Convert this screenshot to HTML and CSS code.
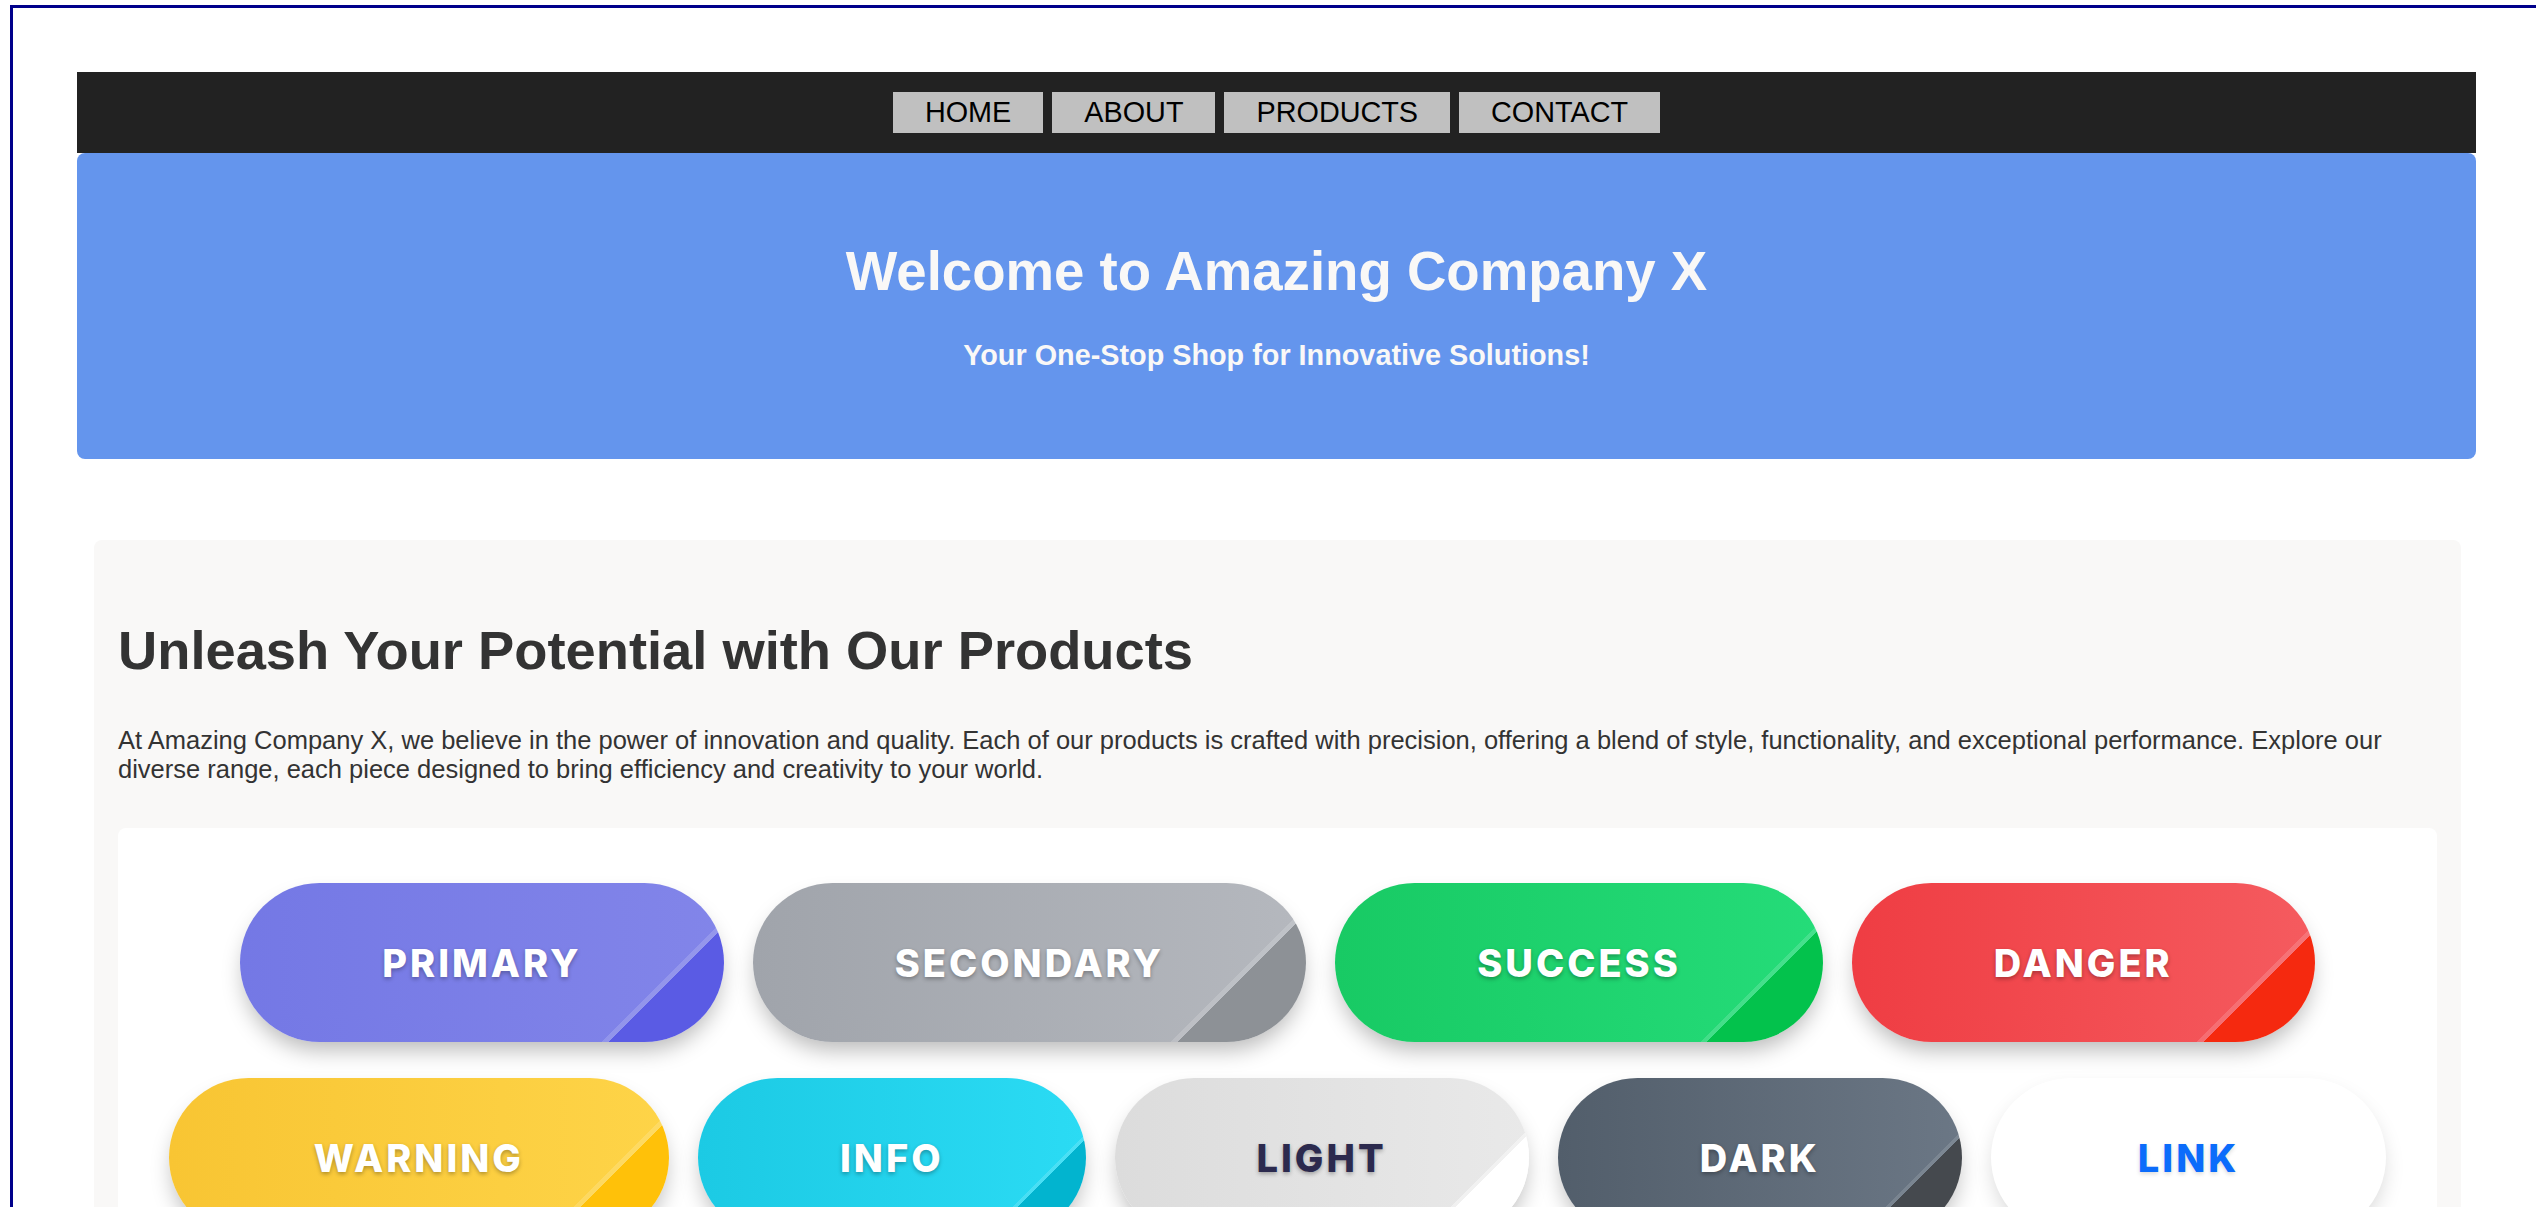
FILE: index.html
```html
<!DOCTYPE html>
<html lang="en">
<head>
<meta charset="utf-8">
<title>Amazing Company X</title>
<link rel="stylesheet" href="styles.css">
</head>
<body>
  <nav class="topnav">
    <a class="nav-link" href="#">HOME</a>
    <a class="nav-link" href="#">ABOUT</a>
    <a class="nav-link" href="#">PRODUCTS</a>
    <a class="nav-link" href="#">CONTACT</a>
  </nav>
  <header class="hero">
    <h1 class="hero-title">Welcome to Amazing Company X</h1>
    <p class="hero-sub">Your One-Stop Shop for Innovative Solutions!</p>
  </header>
  <section class="products">
    <h2 class="products-title">Unleash Your Potential with Our Products</h2>
    <p class="products-text">At Amazing Company X, we believe in the power of innovation and quality. Each of our products is crafted with precision, offering a blend of style, functionality, and exceptional performance. Explore our diverse range, each piece designed to bring efficiency and creativity to your world.</p>
    <div class="card">
      <div class="btns">
        <button class="btn btn-primary">PRIMARY</button>
        <button class="btn btn-secondary">SECONDARY</button>
        <button class="btn btn-success">SUCCESS</button>
        <button class="btn btn-danger">DANGER</button>
        <button class="btn btn-warning">WARNING</button>
        <button class="btn btn-info">INFO</button>
        <button class="btn btn-light">LIGHT</button>
        <button class="btn btn-dark">DARK</button>
        <button class="btn btn-link">LINK</button>
      </div>
    </div>
  </section>
</body>
</html>
```

FILE: styles.css
```css
html {
  overflow-x: hidden;
  background: #ffffff;
}

body {
  margin: 5px 10px 0 10px;
  border: 3px solid #00008b;
  padding: 64px;
  width: 2399px;
  background: #ffffff;
  font-family: "Liberation Sans", Arial, sans-serif;
}

.topnav {
  background: #222222;
  padding: 20px 0;
  display: flex;
  justify-content: center;
  gap: 9px;
}

.nav-link {
  display: block;
  background: #c0c0c0;
  color: #000000;
  text-decoration: none;
  font-size: 28.8px;
  line-height: 33px;
  padding: 4px 32px;
}

.hero {
  background: #6495ed;
  border-radius: 8px;
  padding: 87px 20px 87px;
  text-align: center;
  color: #f9f8f7;
}

.hero-title {
  margin: 0 0 36px;
  font-size: 54.6px;
  line-height: 63px;
  font-weight: 700;
}

.hero-sub {
  margin: 0;
  font-size: 28.8px;
  line-height: 33px;
  font-weight: 700;
}

.products {
  margin: 81px 15px 0 17px;
  background: #f9f8f7;
  border-radius: 8px;
  padding: 80px 24px 24px;
  color: #333333;
}

.products-title {
  margin: 0 0 44px;
  font-size: 54.3px;
  line-height: 62px;
  font-weight: 700;
}

.products-text {
  margin: 0 0 44px;
  font-size: 25.5px;
  line-height: 29px;
}

.card {
  background: #ffffff;
  border-radius: 8px;
  padding: 55px 30px 40px;
}

.btns {
  display: flex;
  flex-wrap: wrap;
  justify-content: center;
  column-gap: 29px;
  row-gap: 36px;
}

.btn {
  height: 159px;
  padding: 0 142px;
  border: none;
  border-radius: 80px;
  font-family: Inter, "Open Sans", sans-serif;
  font-weight: 800;
  font-size: 38px;
  letter-spacing: 3px;
  color: #ffffff;
  text-shadow: 0 2px 4px rgba(0, 0, 0, 0.3);
  box-shadow: 0 12px 22px -4px rgba(0, 0, 0, 0.28);
  cursor: pointer;
}

.btn-primary {
  background:
    linear-gradient(135deg, transparent 81%, rgba(255,255,255,0.15) 81%, rgba(255,255,255,0.15) 82%, #5a5be4 82%),
    linear-gradient(to right, #7478e5, #8285e9);
}

.btn-secondary {
  background:
    linear-gradient(135deg, transparent 81%, rgba(255,255,255,0.15) 81%, rgba(255,255,255,0.15) 82%, #8d9196 82%),
    linear-gradient(to right, #a0a4ab, #b5b8be);
}

.btn-success {
  background:
    linear-gradient(135deg, transparent 81%, rgba(255,255,255,0.15) 81%, rgba(255,255,255,0.15) 82%, #03c24c 82%),
    linear-gradient(to right, #18ca64, #25dc79);
}

.btn-danger {
  background:
    linear-gradient(135deg, transparent 81%, rgba(255,255,255,0.15) 81%, rgba(255,255,255,0.15) 82%, #f5290f 82%),
    linear-gradient(to right, #ef3d43, #f55b5f);
}

.btn-warning {
  padding: 0 145px;
  background:
    linear-gradient(135deg, transparent 81%, rgba(255,255,255,0.15) 81%, rgba(255,255,255,0.15) 82%, #ffc109 82%),
    linear-gradient(to right, #f8c533, #fed448);
}

.btn-info {
  background:
    linear-gradient(135deg, transparent 81%, rgba(255,255,255,0.15) 81%, rgba(255,255,255,0.15) 82%, #02b4cf 82%),
    linear-gradient(to right, #1ccae4, #2bdbf4);
}

.btn-light {
  color: #2c2a4e;
  background:
    linear-gradient(135deg, transparent 81%, rgba(255,255,255,0.4) 81%, rgba(255,255,255,0.4) 82%, #ffffff 82%),
    linear-gradient(to right, #dcdcdc, #e9e9e9);
}

.btn-dark {
  background:
    linear-gradient(135deg, transparent 81%, rgba(255,255,255,0.12) 81%, rgba(255,255,255,0.12) 82%, #45494e 82%),
    linear-gradient(to right, #525e6b, #6b7785);
}

.btn-link {
  padding: 0 147px;
  color: #0b6cfb;
  background: #ffffff;
  text-shadow: 0 2px 4px rgba(0, 0, 0, 0.15);
  box-shadow: 0 10px 22px -4px rgba(0, 0, 0, 0.18);
}
```
